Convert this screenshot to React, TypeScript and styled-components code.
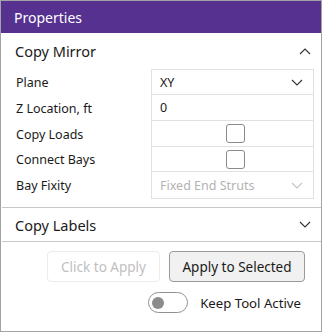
import React from "react";
import styled, { createGlobalStyle } from "styled-components";

const Global = createGlobalStyle`
  html, body { margin: 0; padding: 0; background: #ffffff; }
  body { font-family: "Noto Sans", "Open Sans", sans-serif; }
`;

const Panel = styled.div`
  width: 322px;
  height: 332px;
  box-sizing: border-box;
  border: 1px solid #a3a3a3;
  background: #ffffff;
  display: flex;
  flex-direction: column;
  overflow: hidden;
`;

const Header = styled.div`
  height: 32px;
  background: #56318f;
  color: #ffffff;
  font-size: 14px;
  display: flex;
  align-items: center;
  padding-left: 13px;
`;

const SectionHead = styled.div<{ $h: number }>`
  height: ${(p) => p.$h}px;
  display: flex;
  align-items: center;
  justify-content: space-between;
  padding: 0 10px 0 14px;
  font-size: 14.5px;
  color: #1a1a1a;
`;

const Divider = styled.div`
  height: 1px;
  background: #c8c8c8;
  margin-left: 1px;
`;

const Grid = styled.div`
  display: grid;
  grid-template-columns: 135px 163px;
  padding-left: 15px;
`;

const Label = styled.div<{ $h: number }>`
  height: ${(p) => p.$h}px;
  display: flex;
  align-items: center;
  font-size: 12.5px;
  color: #1a1a1a;
`;

const Cell = styled.div<{ $h: number; $first?: boolean }>`
  height: ${(p) => p.$h}px;
  box-sizing: border-box;
  border: 1px solid #e1e1e1;
  border-top-width: ${(p) => (p.$first ? 1 : 0)}px;
  display: flex;
  align-items: center;
  padding: 0 10px 0 8px;
  font-size: 12.5px;
  color: #1a1a1a;
`;

const SelectCell = styled(Cell)<{ $disabled?: boolean }>`
  justify-content: space-between;
  color: ${(p) => (p.$disabled ? "#b3b3b3" : "#1a1a1a")};
`;

const CheckCell = styled(Cell)`
  justify-content: center;
  padding: 0;
`;

const Check = styled.div`
  width: 19px;
  height: 19px;
  box-sizing: border-box;
  border: 1px solid #8a8a8a;
  border-radius: 3px;
  margin-left: 5px;
`;

const Spacer = styled.div<{ $h: number }>`
  height: ${(p) => p.$h}px;
`;

const Actions = styled.div`
  display: flex;
  justify-content: flex-end;
  gap: 9px;
  padding: 9px 16px 0 0;
`;

const Button = styled.div<{ $disabled?: boolean }>`
  height: 31px;
  box-sizing: border-box;
  width: ${(p) => (p.$disabled ? 113 : 136)}px;
  display: flex;
  align-items: center;
  justify-content: center;
  border-radius: 4px;
  font-size: 13.5px;
  border: 1px solid ${(p) => (p.$disabled ? "#ececec" : "#9a9a9a")};
  background: ${(p) => (p.$disabled ? "#ffffff" : "#f1f1f1")};
  color: ${(p) => (p.$disabled ? "#c0c0c0" : "#1a1a1a")};
`;

const ToggleRow = styled.div`
  display: flex;
  justify-content: flex-end;
  align-items: center;
  gap: 12px;
  padding: 10px 20px 0 0;
  font-size: 13.2px;
  color: #1a1a1a;
`;

const Toggle = styled.div`
  width: 40px;
  height: 21px;
  box-sizing: border-box;
  border: 1px solid #8f8f8f;
  border-radius: 11px;
  display: flex;
  align-items: center;
  padding-left: 3px;
`;

const Knob = styled.div`
  width: 12px;
  height: 12px;
  border-radius: 50%;
  background: #8c8c8c;
`;

const Chevron = ({ up, color = "#333" }: { up?: boolean; color?: string }) => (
  <svg width="12" height="7" viewBox="0 0 12 7">
    <polyline
      points={up ? "1,6 6,1 11,6" : "1,1 6,6 11,1"}
      fill="none"
      stroke={color}
      strokeWidth="1.1"
    />
  </svg>
);

export default function App() {
  return (
    <>
      <Global />
      <Panel>
        <Header>Properties</Header>
        <SectionHead $h={36}>
          <span>Copy Mirror</span>
          <Chevron up />
        </SectionHead>
        <Grid>
          <Label $h={26}>Plane</Label>
          <SelectCell $h={26} $first>
            <span>XY</span>
            <Chevron />
          </SelectCell>
          <Label $h={26}>Z Location, ft</Label>
          <Cell $h={26}>0</Cell>
          <Label $h={26}>Copy Loads</Label>
          <CheckCell $h={26}>
            <Check />
          </CheckCell>
          <Label $h={25}>Connect Bays</Label>
          <CheckCell $h={25}>
            <Check />
          </CheckCell>
          <Label $h={27}>Bay Fixity</Label>
          <SelectCell $h={27} $disabled>
            <span>Fixed End Struts</span>
            <Chevron color="#c4c4c4" />
          </SelectCell>
        </Grid>
        <Spacer $h={8} />
        <Divider />
        <SectionHead $h={33}>
          <span>Copy Labels</span>
          <Chevron />
        </SectionHead>
        <Divider />
        <Actions>
          <Button $disabled>Click to Apply</Button>
          <Button>Apply to Selected</Button>
        </Actions>
        <ToggleRow>
          <Toggle>
            <Knob />
          </Toggle>
          <span>Keep Tool Active</span>
        </ToggleRow>
      </Panel>
    </>
  );
}
